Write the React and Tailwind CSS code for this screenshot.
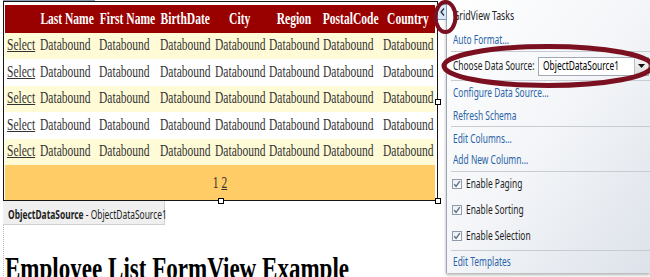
import React from "react";

const serif = { fontFamily: '"Liberation Serif", "Times New Roman", serif' };
const sans = { fontFamily: '"Noto Sans", "Open Sans", sans-serif' };

const S = ({ children, className = "" }) => (
  <span className={`inline-block whitespace-nowrap origin-left scale-x-[0.72] ${className}`}>{children}</span>
);
const C = ({ children, className = "" }) => (
  <span className={`inline-block whitespace-nowrap origin-center scale-x-[0.72] ${className}`}>{children}</span>
);
const P = ({ children, className = "" }) => (
  <span className={`inline-block whitespace-nowrap origin-left scale-x-[0.7] ${className}`}>{children}</span>
);

const cols = [
  { name: "Last Name", w: "w-[59px]" },
  { name: "First Name", w: "w-[61px]" },
  { name: "BirthDate", w: "w-[55px]" },
  { name: "City", w: "w-[54px]" },
  { name: "Region", w: "w-[54px]" },
  { name: "PostalCode", w: "w-[60px]" },
  { name: "Country", w: "w-[54px]" },
];

const rows = [
  { h: "h-[26px]", bg: "bg-[#fffbd6]" },
  { h: "h-[27px]", bg: "bg-white" },
  { h: "h-[26px]", bg: "bg-[#fffbd6]" },
  { h: "h-[27px]", bg: "bg-white" },
  { h: "h-[26px]", bg: "bg-[#fffbd6]" },
];

function Handle({ className }) {
  return <div className={`absolute w-[6px] h-[6px] bg-white border border-black ${className}`} />;
}

function Check() {
  return (
    <div className="w-[10px] h-[10px] border border-[#8f9bab] bg-gradient-to-br from-[#e9edf2] to-[#ffffff] flex items-center justify-center">
      <svg width="8" height="8" viewBox="0 0 8 8">
        <path d="M1.2 4.2 L3.1 6.3 L6.8 1.2" fill="none" stroke="#5d6e84" strokeWidth="1.4" />
      </svg>
    </div>
  );
}

function Link({ children, h }) {
  return (
    <div className={`${h} flex items-center pl-[6px] text-[12px] text-[#2a64a8]`}>
      <P>{children}</P>
    </div>
  );
}

function Sep() {
  return <div className="h-px ml-[4px] bg-[#c7ccd3]" />;
}

function CheckRow({ children, h }) {
  return (
    <div className={`${h} flex items-center pl-[5px] gap-[4px] text-[12px] text-[#1e1e1e]`}>
      <Check />
      <P>{children}</P>
    </div>
  );
}

export default function App() {
  return (
    <div className="relative w-[650px] h-[277px] overflow-hidden bg-white flex">
      {/* designer surface */}
      <div className="w-[446px] h-full flex flex-col">
        <div className="h-[3px] w-[92px] ml-[3px] border-x border-b border-[#8d9cb0] bg-[#eef2f8]" />
        <div className="relative ml-[3px] w-[435px] h-[200px] border border-[#151515] pt-[3px] pl-[1px]" style={serif}>
          <div className="w-[430px] flex flex-col text-[16px]">
            <div className="h-[28px] flex bg-[#990000] text-white font-bold">
              <div className="w-[33px]" />
              {cols.map((c) => (
                <div key={c.name} className={`${c.w} flex items-center justify-center`}>
                  <C>{c.name}</C>
                </div>
              ))}
            </div>
            {rows.map((r, i) => (
              <div key={i} className={`${r.h} ${r.bg} flex items-end pb-[2px] text-[#333333]`}>
                <div className="w-[33px] flex items-center pl-[2px]">
                  <S className="underline">Select</S>
                </div>
                {cols.map((c) => (
                  <div key={c.name} className={`${c.w} flex items-center pl-[2px]`}>
                    <S>Databound</S>
                  </div>
                ))}
              </div>
            ))}
            <div className="h-[35px] bg-[#ffcc66] flex items-center justify-center text-[#333333]">
              <C>
                1 <span className="underline">2</span>
              </C>
            </div>
          </div>
          <Handle className="left-[214px] bottom-[-4px]" />
          <Handle className="right-[-4px] bottom-[-4px]" />
          <Handle className="right-[-4px] top-[97px]" />
        </div>
        <div className="ml-[3px] w-[162px] h-[32px] bg-[#efefef] border-r border-b border-[#d0d0d0] pt-[5px] pl-[5px] text-[12px] text-[#1e1e1e]" style={sans}>
          <P>
            <span className="font-bold">ObjectDataSource</span> - ObjectDataSource1
          </P>
        </div>
        <div className="flex-1 ml-[3px] border-l border-dotted border-[#bdbdbd] pt-[27px] pl-[1px]" style={serif}>
          <h1 className="text-[32px] leading-[32px] font-bold text-black">
            <S>Employee List FormView Example</S>
          </h1>
        </div>
      </div>

      {/* smart tag panel */}
      <div
        className="w-[204px] h-[273px] border-l border-[#9ea8b5] bg-gradient-to-br from-white via-[#f3f5f8] to-[#dde2ea] shadow-[0_2px_3px_rgba(0,0,0,0.3)] flex flex-col"
        style={sans}
      >
        <div className="h-[33px] flex items-center pl-[6px] text-[12.5px] text-[#222222]">
          <P>GridView Tasks</P>
        </div>
        <Link h="h-[14px]">Auto Format...</Link>
        <div className="h-[4px]" />
        <Sep />
        <div className="h-[28px] flex items-center pl-[6px] text-[12px] text-[#1e1e1e]">
          <div className="w-[85px] shrink-0">
            <P>Choose Data Source:</P>
          </div>
          <div className="w-[111px] shrink-0 h-[19px] bg-white border border-[#a3a9b2] flex items-center">
            <div className="flex-1 min-w-0 overflow-hidden pl-[4px] text-black">
              <P>ObjectDataSource1</P>
            </div>
            <div className="w-[14px] shrink-0 h-full border-l border-[#b8bec6] bg-gradient-to-b from-[#f7f7f7] to-[#dcdcdc] flex items-center justify-center">
              <svg width="7" height="4" viewBox="0 0 7 4">
                <path d="M0 0 L7 0 L3.5 4 Z" fill="#111" />
              </svg>
            </div>
          </div>
        </div>
        <Sep />
        <Link h="h-[24px]">Configure Data Source...</Link>
        <Link h="h-[21px]">Refresh Schema</Link>
        <Sep />
        <Link h="h-[24px]">Edit Columns...</Link>
        <Link h="h-[18px]">Add New Column...</Link>
        <div className="h-[2px]" />
        <Sep />
        <CheckRow h="h-[24px]">Enable Paging</CheckRow>
        <CheckRow h="h-[27px]">Enable Sorting</CheckRow>
        <CheckRow h="h-[26px]">Enable Selection</CheckRow>
        <div className="h-px" />
        <Sep />
        <Link h="h-[21px]">Edit Templates</Link>
      </div>

      {/* smart tag button */}
      <div className="absolute left-[437px] top-[4px] w-[10px] h-[16px] bg-[#dce7f5] border border-[#7d97b8] flex items-center justify-center">
        <svg width="5" height="8" viewBox="0 0 5 8">
          <path d="M4 0.5 L1 4 L4 7.5" fill="none" stroke="#1a2a40" strokeWidth="1.2" />
        </svg>
      </div>

      {/* red annotations */}
      <svg className="absolute inset-0 pointer-events-none" width="650" height="277" viewBox="0 0 650 277">
        <ellipse cx="445.5" cy="17" rx="10" ry="15" fill="none" stroke="#7a1020" strokeWidth="4" />
        <ellipse cx="548" cy="66" rx="104" ry="19.5" fill="none" stroke="#7a1020" strokeWidth="5" />
      </svg>
    </div>
  );
}
